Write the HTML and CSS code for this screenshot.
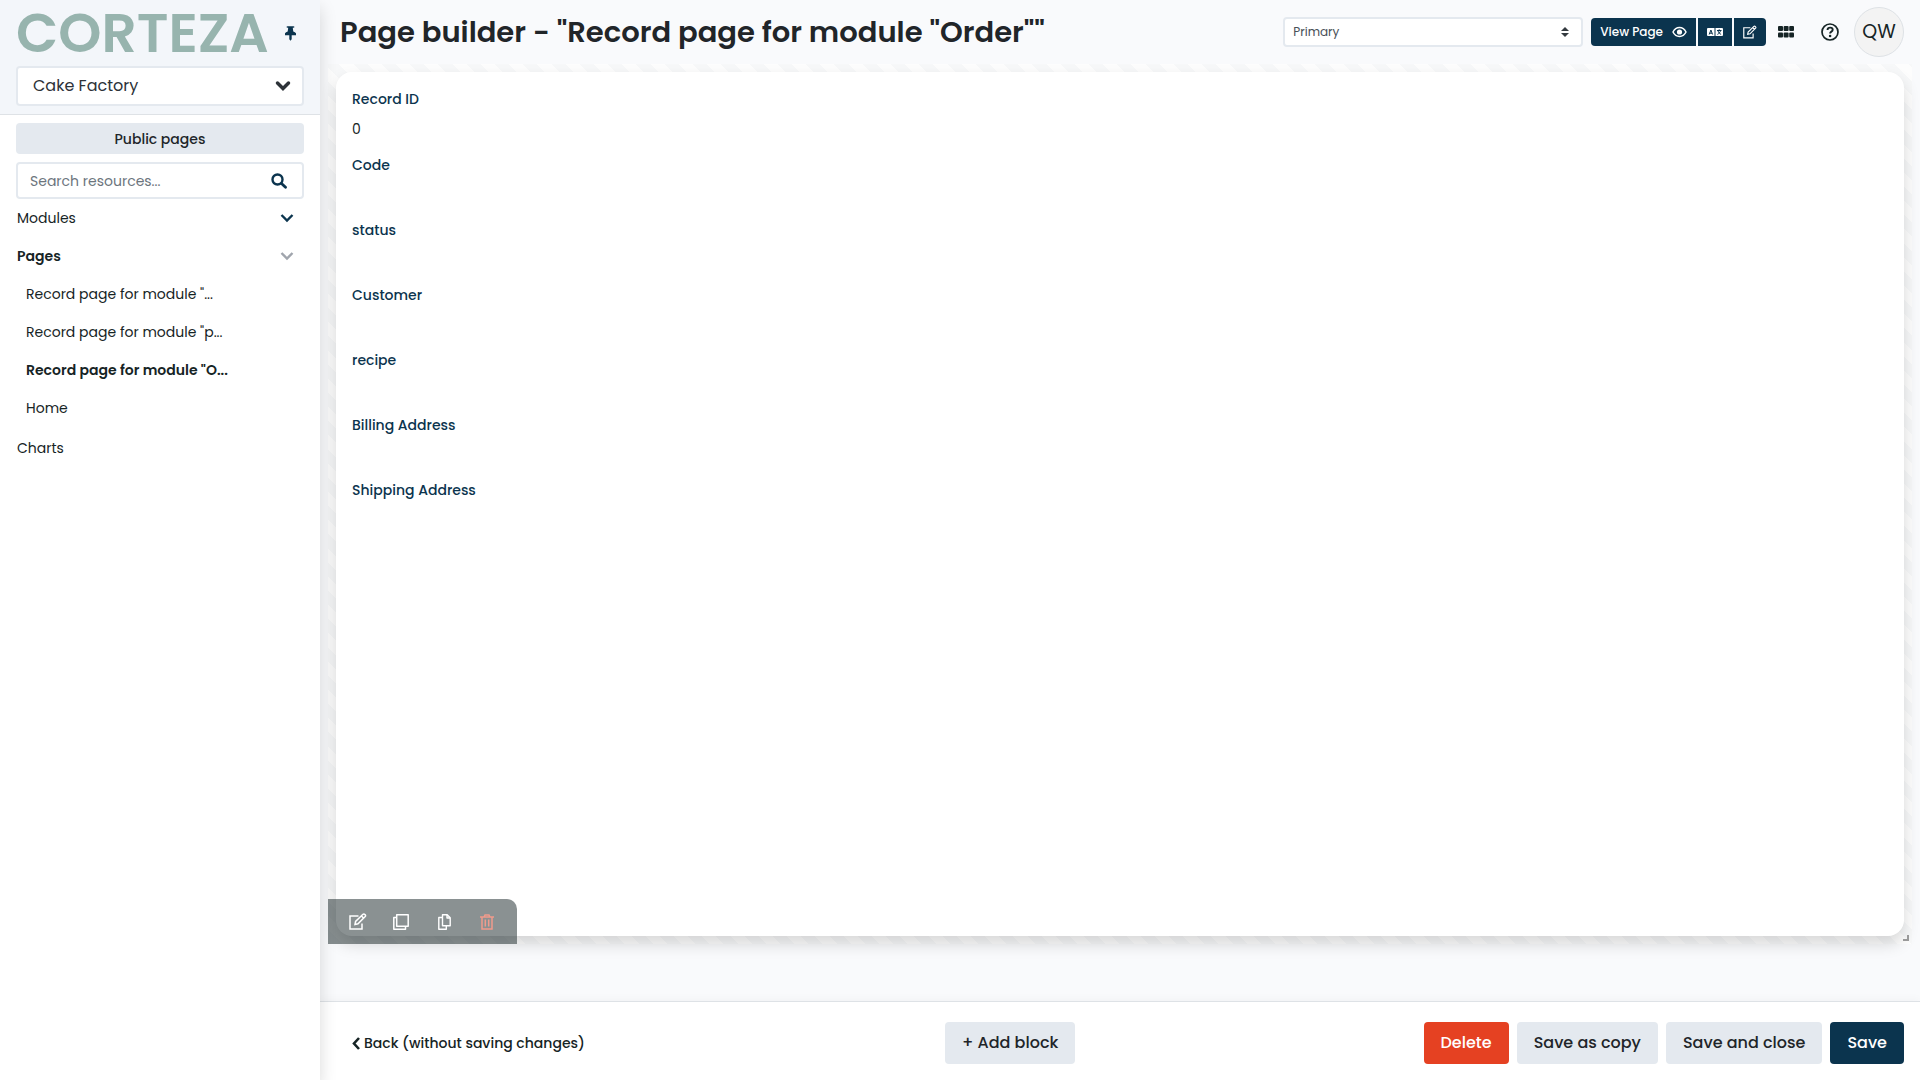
FILE: index.html
```html
<!DOCTYPE html>
<html lang="en">
<head>
<meta charset="utf-8">
<title>Page builder - Corteza</title>
<link rel="stylesheet" href="styles.css">
</head>
<body>
<div class="app">
  <aside class="sidebar">
    <div class="sidebar-head">
      <div class="brand">
        <span class="logo">CORTEZA</span>
        <button class="icon-btn pin" type="button" aria-label="Unpin sidebar">
          <svg width="11" height="15" viewBox="0 0 384 512" aria-hidden="true"><path d="M298 28a28 28 0 0 1-28 28h-17l14 130c42 20 73 53 85 94 6 20-8 40-30 40H224v136l-32 56-32-56V320H62c-22 0-36-20-30-40 12-41 43-74 85-94l14-130h-17A28 28 0 0 1 86 28 28 28 0 0 1 114 0h156a28 28 0 0 1 28 28z" transform="translate(-58 0) scale(1.3 1)"/></svg>
        </button>
      </div>
      <button class="namespace" type="button">
        <span>Cake Factory</span>
        <svg width="16" height="12" viewBox="0 0 16 12" aria-hidden="true"><path d="M2.500 3 8 8.500 13.500 3" fill="none" stroke="currentColor" stroke-width="3.500" stroke-linecap="round"/></svg>
      </button>
    </div>
    <div class="sidebar-body">
      <button class="btn btn-light public" type="button">Public pages</button>
      <label class="search">
        <input type="text" placeholder="Search resources..." aria-label="Search resources">
        <svg width="16" height="16" viewBox="0 0 16 16" aria-hidden="true"><circle cx="6.500" cy="6.500" r="5" fill="none" stroke="currentColor" stroke-width="2.400"/><path d="m10.500 10.500 4 3.800" stroke="currentColor" stroke-width="2.800" stroke-linecap="round"/></svg>
      </label>
      <nav class="nav">
        <div class="nav-row"><a href="#modules">Modules</a>
          <button class="icon-btn" type="button" aria-label="Expand modules"><svg width="14" height="10" viewBox="0 0 14 10" aria-hidden="true"><path d="m1.500 2 5.500 5.500L12.500 2" fill="none" stroke="currentColor" stroke-width="2.400"/></svg></button></div>
        <div class="nav-row active"><a href="#pages">Pages</a>
          <button class="icon-btn muted" type="button" aria-label="Collapse pages"><svg width="14" height="10" viewBox="0 0 14 10" aria-hidden="true"><path d="m1.500 2 5.500 5.500L12.500 2" fill="none" stroke="currentColor" stroke-width="2.400"/></svg></button></div>
        <div class="nav-row child"><a href="#p1">Record page for module "...</a></div>
        <div class="nav-row child"><a href="#p2">Record page for module "p...</a></div>
        <div class="nav-row child active"><a href="#p3">Record page for module "O...</a></div>
        <div class="nav-row child"><a href="#home">Home</a></div>
        <div class="nav-row last"><a href="#charts">Charts</a></div>
      </nav>
    </div>
  </aside>

  <main class="main">
    <header class="topbar">
      <h1>Page builder - "Record page for module "Order""</h1>
      <div class="tools">
        <div class="layout-select">
          <select aria-label="Page layout"><option>Primary</option></select>
          <svg width="8" height="10" viewBox="0 0 8 10" aria-hidden="true"><path d="M4 0 8 4H0zM4 10 0 6h8z"/></svg>
        </div>
        <div class="btn-group">
          <button class="btn-sm" type="button">View Page
            <svg width="15" height="12" viewBox="0 0 15 12" aria-hidden="true"><path d="M1 6c3-6 10-6 13 0-3 6-10 6-13 0z" fill="none" stroke="currentColor" stroke-width="1.500"/><circle cx="7.500" cy="6" r="2.600"/></svg>
          </button>
          <button class="btn-sm" type="button" aria-label="Translations">
            <svg width="16" height="8" viewBox="0 0 16 8" aria-hidden="true"><path d="M1 0h6.500v8H1a1 1 0 0 1-1-1V1a1 1 0 0 1 1-1zM8.500 0H15a1 1 0 0 1 1 1v6a1 1 0 0 1-1 1H8.500z"/><path d="M2.200 6.500 3.900 2l1.700 4.500M2.700 5.200h2.400M10 2.500h4.500M12.200 1.300v1.200M13.600 2.500c-.4 1.900-1.600 3-3.200 3.900M11 2.700c.4 1.800 1.600 3 3.100 3.700" fill="none" stroke="#0b344e"/></svg>
          </button>
          <button class="btn-sm" type="button" aria-label="Edit page"><svg width="14" height="14" viewBox="0 0 18 17" aria-hidden="true"><use href="#edit"/></svg></button>
        </div>
        <button class="icon-btn apps" type="button" aria-label="Applications">
          <svg width="16" height="12" viewBox="0 0 16 12" aria-hidden="true"><g><rect width="5" height="5" rx="1"/><rect x="5.600" width="5" height="5" rx="1"/><rect x="11.200" width="4.800" height="5" rx="1"/><rect y="6.500" width="5" height="5" rx="1"/><rect x="5.600" y="6.500" width="5" height="5" rx="1"/><rect x="11.200" y="6.500" width="4.800" height="5" rx="1"/></g></svg>
        </button>
        <button class="icon-btn help" type="button" aria-label="Help">
          <svg width="18" height="18" viewBox="0 0 18 18" aria-hidden="true"><circle cx="9" cy="9" r="8" fill="none" stroke="currentColor" stroke-width="1.700"/><path d="M6.500 7c.2-3.200 5.200-3 5.200-.2 0 2-2.600 1.700-2.600 3.700" fill="none" stroke="currentColor" stroke-width="1.900"/><circle cx="9.100" cy="13" r="1.300"/></svg>
        </button>
        <button class="avatar" type="button">QW</button>
      </div>
    </header>

    <section class="canvas">
      <div class="grid-item">
        <article class="block">
          <dl class="fields">
            <div class="field"><dt>Record ID</dt><dd>0</dd></div>
            <div class="field"><dt>Code</dt><dd></dd></div>
            <div class="field"><dt>status</dt><dd></dd></div>
            <div class="field"><dt>Customer</dt><dd></dd></div>
            <div class="field"><dt>recipe</dt><dd></dd></div>
            <div class="field"><dt>Billing Address</dt><dd></dd></div>
            <div class="field"><dt>Shipping Address</dt><dd></dd></div>
          </dl>
        </article>
        <div class="block-tools">
          <button type="button" aria-label="Edit block"><svg width="18" height="17" viewBox="0 0 18 17" aria-hidden="true"><g id="edit" fill="none" stroke="currentColor" stroke-width="1.500"><path d="M9.500 3H1v13h12v-5.500"/><path d="m6 11.500.6-3L14 1.300c1.200-1 3.300 1 2.200 2.200L9 10.800zM12.500 3l2.200 2.200"/></g></svg></button>
          <button type="button" aria-label="Clone block"><svg width="16" height="16" viewBox="0 0 16 16" aria-hidden="true"><path d="M3.700.8h11.500v11.500H3.700zM3.500 3.500H.8v11.700h11.700v-2.700" fill="none" stroke="currentColor" stroke-width="1.500" stroke-linejoin="round"/></svg></button>
          <button type="button" aria-label="Copy block"><svg width="13" height="16" viewBox="0 0 13 16" aria-hidden="true"><path d="M4.500.8h4.700l3 3v8H4.500zM9 .8V4h3.200M4.300 3.500H.8v11.700h7.500V12" fill="none" stroke="currentColor" stroke-width="1.400" stroke-linejoin="round"/></svg></button>
          <button class="danger" type="button" aria-label="Delete block"><svg width="14" height="16" viewBox="0 0 14 16" aria-hidden="true"><path d="M0 3h14M4 3l1-2h4l1 2M2 3v12h10V3M5.300 5.500v7M8.700 5.500v7" fill="none" stroke="currentColor" stroke-width="1.500"/></svg></button>
        </div>
        <span class="resize"></span>
      </div>
    </section>

    <footer class="footer">
      <a class="back" href="#back"><svg width="8" height="13" viewBox="0 0 8 13" aria-hidden="true"><path d="M7 1 2 6.500 7 12" fill="none" stroke="currentColor" stroke-width="2.600"/></svg>Back (without saving changes)</a>
      <button class="btn btn-light add" type="button">+ Add block</button>
      <div class="foot-right">
        <button class="btn btn-danger" type="button">Delete</button>
        <button class="btn btn-light" type="button">Save as copy</button>
        <button class="btn btn-light" type="button">Save and close</button>
        <button class="btn btn-primary" type="button">Save</button>
      </div>
    </footer>
  </main>
</div>
</body>
</html>
```
FILE: styles.css
```css
* { box-sizing: border-box; }
body {
  margin: 0;
  font-family: Poppins, Inter, "Liberation Sans", sans-serif;
  font-size: 14px;
  line-height: 22px;
  color: #162425;
  background: #f9fafc;
}
button, input, select { font: inherit; color: inherit; }
button { cursor: pointer; border: 0; padding: 0; background: none; }
a { color: inherit; text-decoration: none; }
svg { display: block; fill: currentColor; flex: none; }

.app { display: flex; min-height: 100vh; }

.sidebar {
  position: relative;
  z-index: 2;
  width: 320px;
  flex: none;
  background: #fff;
  box-shadow: 0 8px 16px rgba(0, 0, 0, .15);
}
.sidebar-head {
  height: 115px;
  padding: 0 16px;
  background: #f3f6fa;
  border-bottom: 1px solid #dee2e6;
}
.brand {
  display: flex;
  align-items: center;
  justify-content: space-between;
  height: 66px;
  padding-right: 8px;
}
.logo {
  font-size: 55px;
  line-height: 66px;
  font-weight: 600;
  color: #97b4ae;
}
.icon-btn { display: flex; color: #0b344e; }
.icon-btn.muted { color: #a0a5ad; }
.namespace {
  display: flex;
  align-items: center;
  justify-content: space-between;
  width: 100%;
  height: 40px;
  padding: 0 11px 0 15px;
  font-size: 16px;
  color: #2d3238;
  background: #fff;
  border: 2px solid #e4e9ef;
  border-radius: 4px;
}
.sidebar-body { padding: 8px 16px; }
.btn {
  height: 42px;
  padding: 0 17px;
  border-radius: 4px;
  font-size: 16px;
  font-weight: 500;
  white-space: nowrap;
}
.btn-light { background: #e4e9ef; color: #212529; }
.btn-danger { background: #e54122; color: #fff; }
.btn-primary { background: #0b344e; color: #fff; }
.btn.public {
  display: block;
  width: 100%;
  height: 31px;
  margin-bottom: 8px;
  font-size: 14px;
}
.search {
  display: flex;
  align-items: center;
  height: 37px;
  padding: 0 15px 0 12px;
  border: 2px solid #e4e9ef;
  border-radius: 4px;
  color: #0b344e;
}
.search input {
  flex: 1;
  min-width: 0;
  padding: 0;
  border: 0;
  outline: 0;
  background: none;
}
.search input::placeholder { color: #6c757d; opacity: 1; }
.nav-row {
  display: flex;
  align-items: center;
  justify-content: space-between;
  height: 38px;
  padding: 0 10px 0 1px;
}
.nav-row.child { padding-left: 10px; }
.nav-row.active { font-weight: 600; }
.nav-row.last { margin-top: 2px; }

.main {
  display: flex;
  flex-direction: column;
  flex: 1;
  min-width: 0;
}
.topbar {
  display: flex;
  align-items: center;
  justify-content: space-between;
  height: 64px;
  padding: 0 16px 0 20px;
}
h1 {
  margin: 0;
  font-size: 29px;
  line-height: 40px;
  font-weight: 600;
  color: #212529;
  white-space: nowrap;
}
.tools { display: flex; align-items: center; }
.layout-select { position: relative; margin-right: 8px; }
.layout-select select {
  display: block;
  width: 300px;
  height: 30px;
  padding: 0 8px;
  appearance: none;
  font-size: 12px;
  color: #495057;
  background: #fff;
  border: 2px solid #e4e9ef;
  border-radius: 4px;
}
.layout-select svg {
  position: absolute;
  right: 14px;
  top: 10px;
  color: #343a40;
  pointer-events: none;
}
.btn-group { display: flex; gap: 2px; }
.btn-sm {
  display: flex;
  align-items: center;
  gap: 8px;
  height: 28px;
  padding: 0 9px;
  font-size: 12px;
  font-weight: 500;
  color: #fff;
  background: #0b344e;
}
.btn-sm:first-child { gap: 9px; border-radius: 4px 0 0 4px; }
.btn-sm:last-child { border-radius: 0 4px 4px 0; }
.apps, .help { color: #162425; }
.apps { margin: 0 27px 0 12px; }
.help { margin-right: 15px; }
.avatar {
  width: 50px;
  height: 50px;
  border: 1px solid #dee2e6;
  border-radius: 50%;
  background: #f3f3f3;
  font-size: 19px;
}

.canvas {
  display: flex;
  flex: 1;
  padding: 0 8px 57px;
}
.grid-item {
  position: relative;
  display: flex;
  flex: 1;
  padding: 8px;
  background: repeating-linear-gradient(45deg, #f7f8f9 0 10px, #fdfdfd 10px 20px);
}
.block {
  flex: 1;
  padding: 16px;
  background: #fff;
  border-radius: 16px;
  box-shadow: 0 8px 16px rgba(0, 0, 0, .15);
}
.fields { margin: 0; }
.field { height: 65px; }
.field:first-child { height: 66px; }
dt {
  height: 22px;
  margin-bottom: 8px;
  font-weight: 500;
  color: #0b344e;
}
dd { margin: 0; }
.block-tools {
  position: absolute;
  left: 0;
  bottom: 0;
  display: flex;
  align-items: center;
  width: 189px;
  height: 45px;
  padding: 0 8px;
  color: #fff;
  background: rgba(22, 36, 37, .5);
  border-top-right-radius: 10px;
}
.block-tools button {
  display: flex;
  flex: 1;
  justify-content: center;
}
.block-tools .danger { color: #f09b8c; }
.resize {
  position: absolute;
  right: 3px;
  bottom: 3px;
  width: 6px;
  height: 6px;
  border: solid #999;
  border-width: 0 2px 2px 0;
}

.footer {
  display: flex;
  align-items: center;
  justify-content: space-between;
  height: 79px;
  padding: 4px 16px 0 20px;
  background: #fff;
  border-top: 1px solid #dee2e6;
  box-shadow: 0 -2px 8px rgba(0, 0, 0, .03);
}
.back {
  display: flex;
  align-items: center;
  gap: 4px;
  padding: 0 12px;
  font-weight: 500;
}
.foot-right { display: flex; gap: 8px; }
```
